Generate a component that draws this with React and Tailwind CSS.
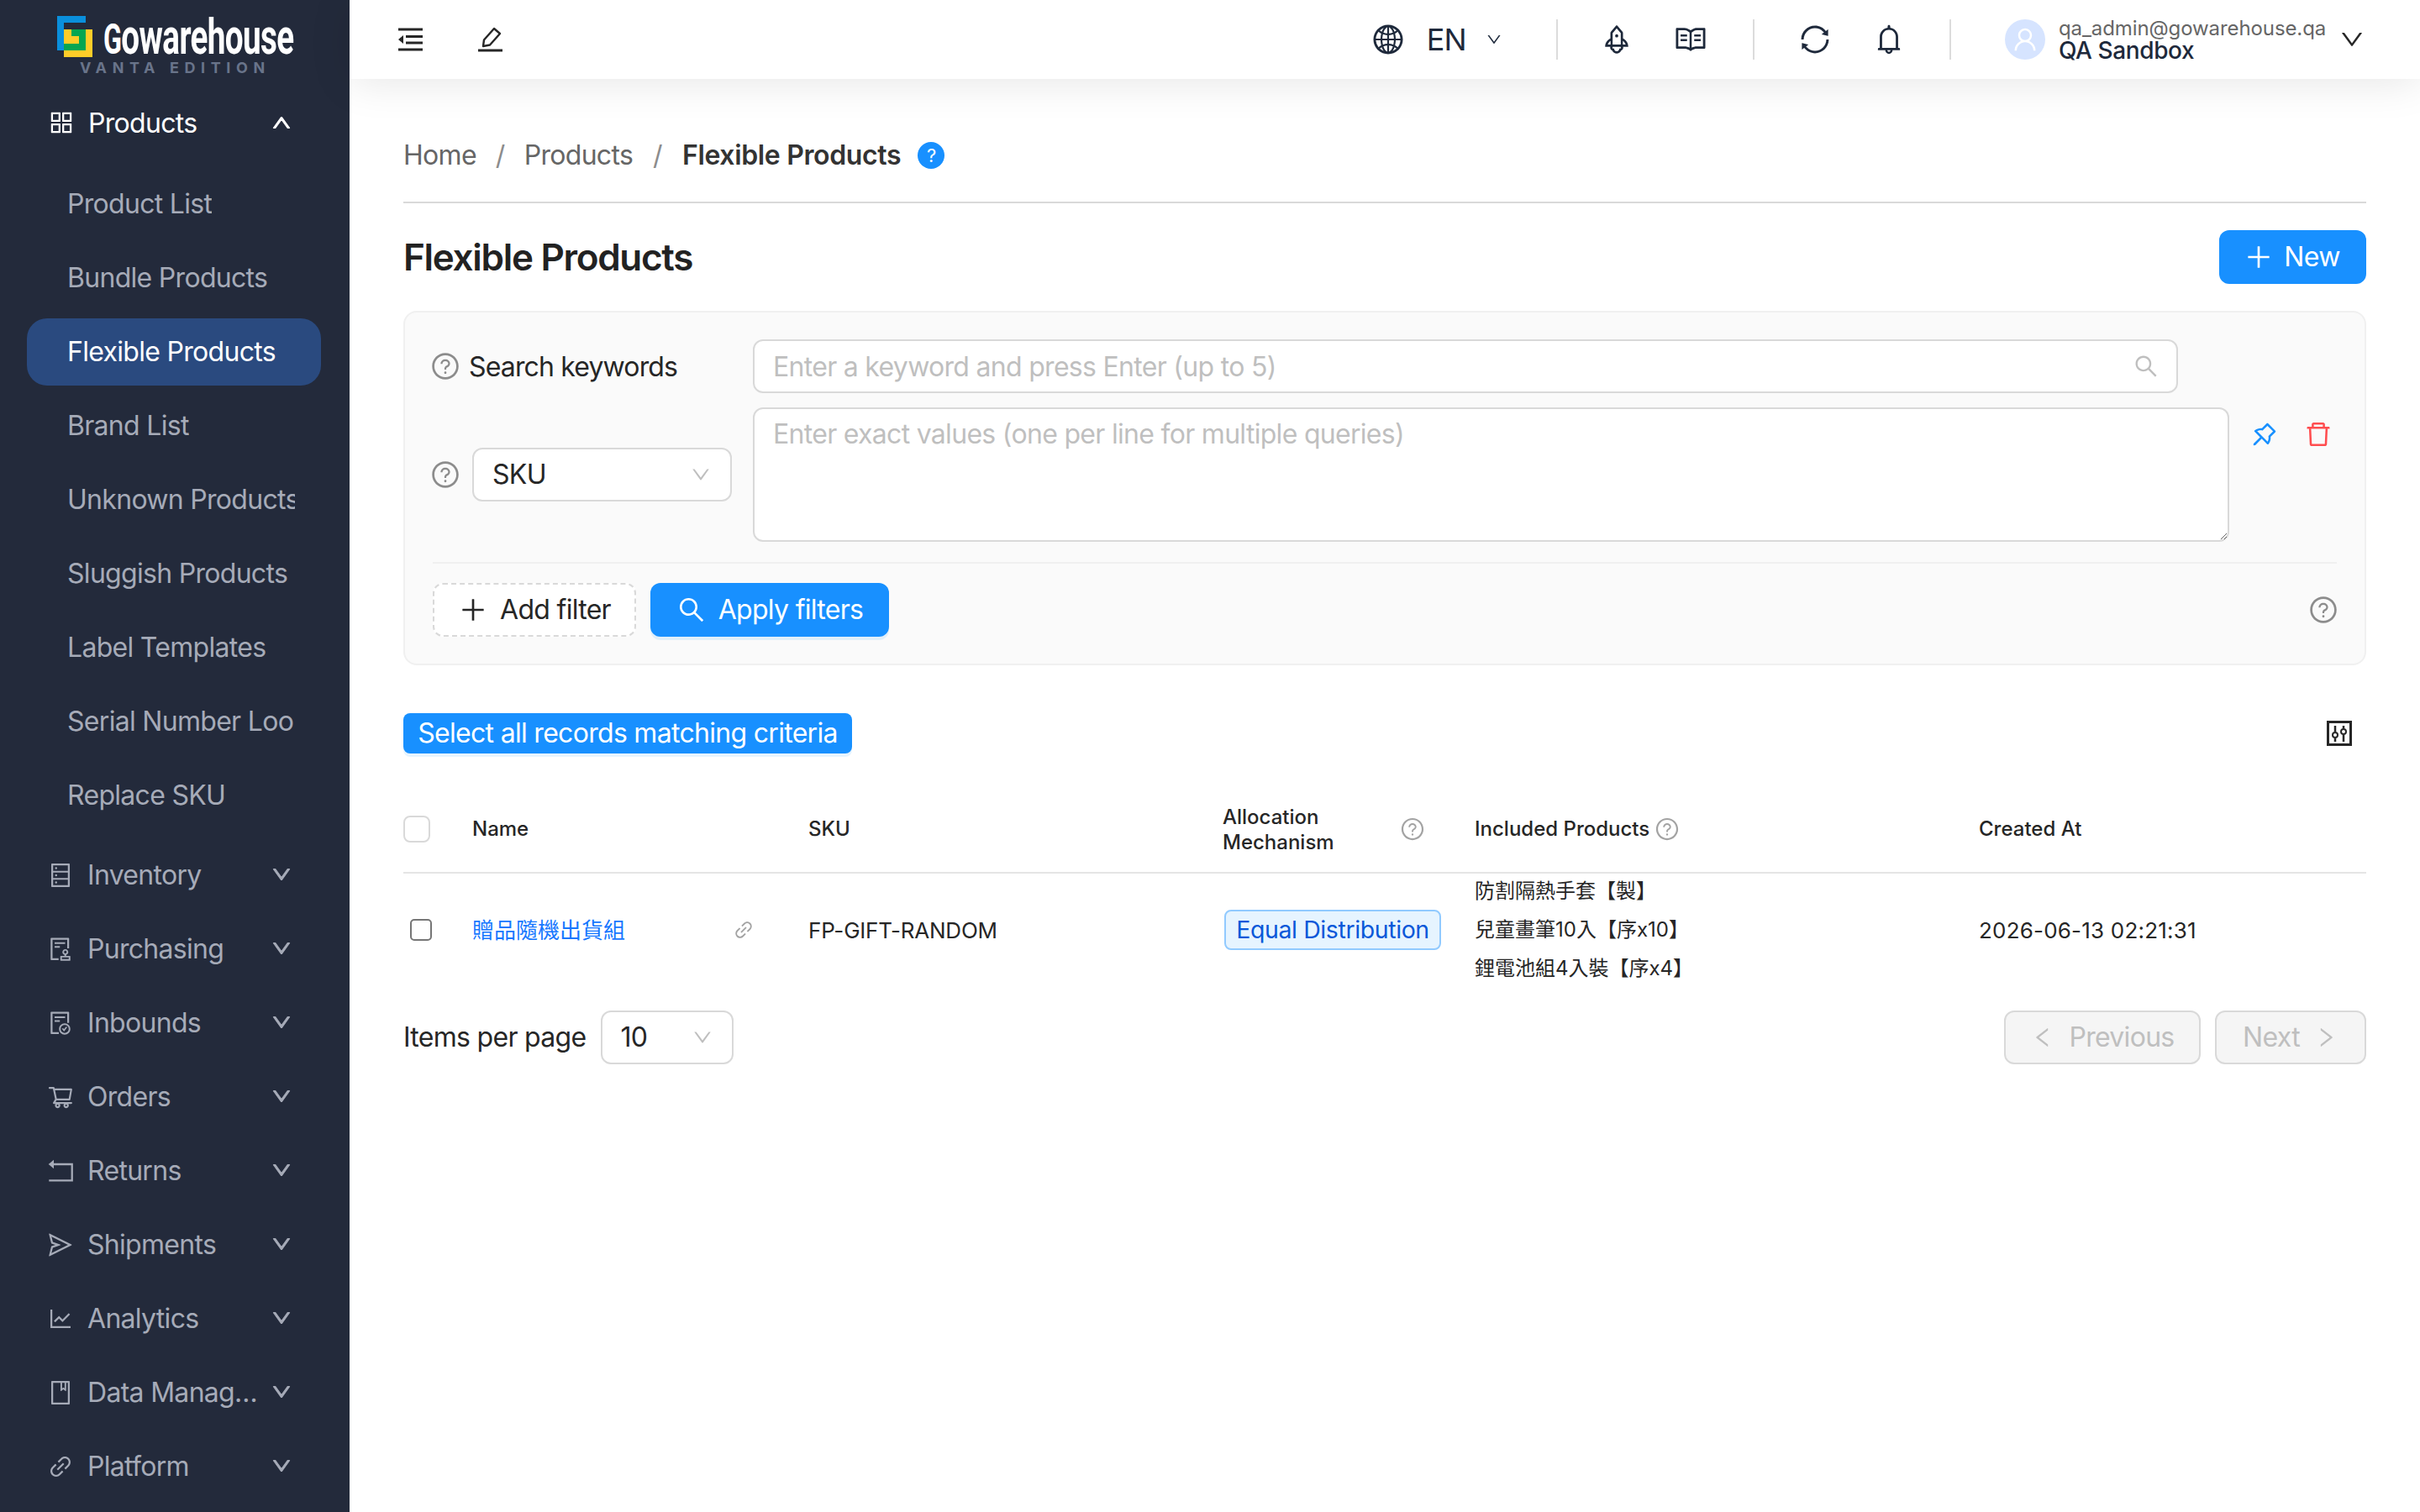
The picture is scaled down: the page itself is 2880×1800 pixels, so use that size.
import {
  AiOutlineAppstore,
  AiOutlineAudit,
  AiOutlineBell,
  AiOutlineBook,
  AiOutlineDatabase,
  AiOutlineDelete,
  AiOutlineDown,
  AiOutlineFileDone,
  AiOutlineGlobal,
  AiOutlineLeft,
  AiOutlineLineChart,
  AiOutlineLink,
  AiOutlinePlus,
  AiOutlinePushpin,
  AiOutlineQuestionCircle,
  AiOutlineRead,
  AiOutlineRight,
  AiOutlineRocket,
  AiOutlineSearch,
  AiOutlineSend,
  AiOutlineShoppingCart,
  AiOutlineSync,
  AiOutlineUp,
  AiOutlineUser,
} from "react-icons/ai";

const FONT = "font-['Inter','Noto_Sans_CJK_TC',sans-serif]";

const ReturnIcon = ({ size = 28, className = "" }) => (
  <svg width={size} height={size} viewBox="0 0 28 28" fill="none" stroke="currentColor" strokeWidth="2" className={className}>
    <path d="M6 7H26V24H2" />
    <path d="M7 2.5V11.5L1.5 7Z" fill="currentColor" stroke="none" />
  </svg>
);

const subItems = [
  "Product List",
  "Bundle Products",
  "Flexible Products",
  "Brand List",
  "Unknown Products",
  "Sluggish Products",
  "Label Templates",
  "Serial Number Lookup",
  "Replace SKU",
];

const groups = [
  { name: "Inventory", icon: AiOutlineDatabase },
  { name: "Purchasing", icon: AiOutlineAudit },
  { name: "Inbounds", icon: AiOutlineFileDone },
  { name: "Orders", icon: AiOutlineShoppingCart },
  { name: "Returns", icon: ReturnIcon },
  { name: "Shipments", icon: AiOutlineSend },
  { name: "Analytics", icon: AiOutlineLineChart },
  { name: "Data Management", icon: AiOutlineBook },
  { name: "Platform", icon: AiOutlineLink },
];

function Logo() {
  return (
    <div className="h-[106px] relative shrink-0">
      <div className="flex items-start pl-[68px] pt-[19px] gap-[12px]">
        <svg width="43" height="50" viewBox="0 0 43 50" className="shrink-0">
          <path d="M0 0H34V8H8V41H0Z" fill="#0a8fdc" />
          <rect x="8" y="16" width="34" height="33" fill="#ffcd29" />
          <path d="M17 16H34V41H8V33H26V24H17Z" fill="#05a651" />
        </svg>
        <span className="font-['Roboto',sans-serif] font-bold text-white text-[60px] leading-[50px] tracking-[-1px] origin-left scale-x-[0.645] whitespace-nowrap">
          <span className="text-[50px]">G</span>owarehouse
        </span>
      </div>
      <div className="absolute left-[95px] top-[72px] text-[18px] leading-[18px] font-bold tracking-[6.6px] text-[#69748a] whitespace-nowrap">
        VANTA EDITION
      </div>
    </div>
  );
}

function Sidebar() {
  return (
    <aside className="w-[416px] shrink-0 h-full bg-[#232a3b] overflow-hidden flex flex-col">
      <Logo />
      <div className="ml-[32px] mr-[34px] h-[80px] flex items-center pl-[24px] pr-[34px] text-white text-[32px] shrink-0">
        <AiOutlineAppstore size={34} className="shrink-0" />
        <span className="ml-[15px] flex-1 pt-[2px]">Products</span>
        <AiOutlineUp size={26} className="stroke-[40px]" />
      </div>
      <div className="mt-[17px] flex flex-col gap-2 shrink-0">
        {subItems.map((item) => (
          <div
            key={item}
            className={`ml-[32px] mr-[34px] h-[80px] shrink-0 flex items-center pl-[48px] pr-[31px] rounded-[24px] text-[32px] ${
              item === "Flexible Products" ? "bg-[#2a4a7f] text-white" : "text-[#a6abb8]"
            }`}
          >
            <span className="whitespace-nowrap overflow-hidden">{item}</span>
          </div>
        ))}
      </div>
      <div className="mt-[15px] flex flex-col gap-2 shrink-0">
        {groups.map((group) => {
          const Icon = group.icon;
          return (
            <div
              key={group.name}
              className="ml-[32px] mr-[34px] h-[80px] shrink-0 flex items-center pl-[24px] pr-[34px] text-[#a6abb8] text-[32px]"
            >
              <Icon size={32} className="shrink-0" />
              <span className="ml-[16px] flex-1 truncate">{group.name}</span>
              <AiOutlineDown size={26} className="shrink-0 ml-[14px] -mt-[2px] stroke-[40px]" />
            </div>
          );
        })}
      </div>
    </aside>
  );
}

function Divider({ className = "" }) {
  return <div className={`w-[2px] h-[48px] bg-[#dcdcdc] ${className}`} />;
}

function Header() {
  return (
    <header className="relative z-10 h-[94px] shrink-0 bg-white flex items-center pl-[58px] pr-[65px] shadow-[0_4px_50px_rgba(0,0,0,0.1)] text-[#1e293b]">
      <svg width="30" height="28" viewBox="0 0 30 28" className="text-[#262626]">
        <path d="M0 2H29M9 10.5H29M9 18H29M0 26H29" stroke="currentColor" strokeWidth="3" fill="none" />
        <path d="M6 9V19L0 14Z" fill="currentColor" />
      </svg>
      <svg width="30" height="30" viewBox="0 0 30 30" className="ml-[65px] text-[#262626]" fill="none" stroke="currentColor" strokeWidth="2.4">
        <path d="M0 28H29" strokeWidth="3" />
        <path d="M6 23L7 15.5L19 2L26 8L14 21.5Z" strokeLinejoin="round" />
      </svg>

      <div className="ml-auto flex items-center">
        <AiOutlineGlobal size={40} />
        <span className="ml-[26px] text-[36px] leading-none">EN</span>
        <AiOutlineDown size={20} className="ml-[23px]" />
        <Divider className="ml-[64px]" />
        <AiOutlineRocket size={40} className="ml-[50px]" />
        <AiOutlineRead size={40} className="ml-[48px]" />
        <Divider className="ml-[54px]" />
        <AiOutlineSync size={40} className="ml-[52px]" />
        <AiOutlineBell size={40} className="ml-[48px]" />
        <Divider className="ml-[52px]" />
        <div className="ml-[64px] w-[48px] h-[48px] rounded-full bg-[#d6e4ff] flex items-center justify-center text-white">
          <AiOutlineUser size={34} />
        </div>
        <div className="ml-[16px] w-[318px] flex flex-col">
          <span className="text-[24px] leading-[26px] tracking-[-0.1px] text-[#666666] whitespace-nowrap">qa_admin@gowarehouse.qa</span>
          <span className="text-[28px] leading-[26px] font-medium tracking-[-0.4px] text-[#1e293b]">QA Sandbox</span>
        </div>
        <AiOutlineDown size={32} className="ml-[15px] text-[#262626]" />
      </div>
    </header>
  );
}

function HelpIcon({ size = 36, className = "" }) {
  return <AiOutlineQuestionCircle size={size} className={`shrink-0 text-[#8c8c8c] ${className}`} />;
}

function FilterPanel() {
  return (
    <section className="mt-[32px] rounded-[16px] border-2 border-[#f0f0f0] bg-[#fafafa] pt-[32px] pb-[32px] pl-[33px] pr-[33px]">
      <div className="flex items-center">
        <HelpIcon className="-ml-[3px]" />
        <span className="ml-[10px] w-[338px] text-[32px] leading-none tracking-[-0.85px] text-[#262626] pt-[2px]">Search keywords</span>
        <div className="w-[1696px] h-[64px] rounded-[12px] border-2 border-[#d9d9d9] bg-white flex items-center pl-[22px] pr-[20px]">
          <input
            readOnly
            placeholder="Enter a keyword and press Enter (up to 5)"
            className="flex-1 bg-transparent outline-none text-[32px] pt-[1px] placeholder:text-[#bfbfbf]"
          />
          <AiOutlineSearch size={32} className="text-[#bfbfbf]" />
        </div>
      </div>
      <div className="mt-[17px] flex items-start">
        <div className="h-[160px] flex items-center">
          <HelpIcon className="-ml-[3px]" />
          <div className="ml-[14px] w-[309px] h-[64px] rounded-[12px] border-2 border-[#d9d9d9] bg-white flex items-center pl-[22px] pr-[22px] text-[32px] text-[#262626]">
            <span className="flex-1">SKU</span>
            <AiOutlineDown size={26} className="text-[#bfbfbf]" />
          </div>
        </div>
        <textarea
          readOnly
          placeholder="Enter exact values (one per line for multiple queries)"
          className="ml-[25px] w-[1757px] h-[160px] rounded-[12px] border-2 border-[#d9d9d9] bg-white py-[10px] px-[22px] outline-none text-[32px] leading-[40px] placeholder:text-[#bfbfbf]"
        />
        <AiOutlinePushpin size={36} className="ml-[24px] mt-[14px] text-[#1890ff]" />
        <AiOutlineDelete size={36} className="ml-[28px] mt-[14px] text-[#ff4d4f]" />
      </div>
      <div className="mt-[24px] h-[2px] bg-[#f0f0f0]" />
      <div className="mt-[23px] flex items-center">
        <button className="w-[242px] h-[64px] rounded-[12px] border-2 border-dashed border-[#d9d9d9] bg-white flex items-center justify-center gap-[14px] text-[32px] text-[#262626]">
          <AiOutlinePlus size={36} />
          Add filter
        </button>
        <button className="ml-[17px] w-[284px] h-[64px] rounded-[12px] bg-[#1890ff] flex items-center justify-center gap-[14px] text-[32px] text-white shadow-[0_4px_0_rgba(5,145,255,0.1)]">
          <AiOutlineSearch size={36} />
          Apply filters
        </button>
        <HelpIcon className="ml-auto -mr-[2px]" />
      </div>
    </section>
  );
}

const CELL_GRID = "grid grid-cols-[82px_400px_493px_300px_600px_1fr] items-center";

function ColumnsIcon() {
  return (
    <svg width="30" height="30" viewBox="0 0 30 30" className="mr-[17px] text-[#262626]" fill="none" stroke="currentColor">
      <rect x="1.5" y="1.5" width="27" height="27" strokeWidth="3" />
      <path d="M10 6V13M10 21V25M20 6V9M20 17V25" strokeWidth="2.5" />
      <circle cx="10" cy="17" r="3" strokeWidth="2" />
      <circle cx="20" cy="13" r="3" strokeWidth="2" />
    </svg>
  );
}

function ProductsTable() {
  return (
    <div className="mt-[39px] tracking-normal">
      <div className={`${CELL_GRID} h-[104px] border-b-2 border-[#e5e5e5] text-[24px] font-medium text-[#262626]`}>
        <div className="w-[32px] h-[32px] rounded-[8px] border-2 border-[#d9d9d9] bg-white" />
        <div>Name</div>
        <div>SKU</div>
        <div className="flex items-center">
          <span className="w-[211px] leading-[30px] pt-[2px]">Allocation Mechanism</span>
          <HelpIcon size={30} className="text-[#a3a3a3]" />
        </div>
        <div className="flex items-center gap-[6px]">
          Included Products
          <HelpIcon size={30} className="text-[#a3a3a3]" />
        </div>
        <div>Created At</div>
      </div>
      <div className={`${CELL_GRID} grid-rows-[134px] h-[134px] text-[26px] text-[#262626]`}>
        <input type="checkbox" readOnly className="ml-[8px] w-[26px] h-[26px] appearance-none rounded-[5px] border-2 border-[#767676] bg-white" />
        <div className="flex items-center pr-[64px]">
          <span className="flex-1 text-[#1677ff]">贈品隨機出貨組</span>
          <AiOutlineLink size={26} className="text-[#a3a3a3]" />
        </div>
        <div className="tracking-[-0.2px]">FP-GIFT-RANDOM</div>
        <div>
          <span className="inline-flex items-center justify-center ml-[2px] w-[258px] h-[48px] rounded-[8px] border-2 border-[#91caff] bg-[#e6f4ff] text-[28.5px] tracking-[-0.4px] text-[#0958d9]">
            Equal Distribution
          </span>
        </div>
        <div className="h-[134px] flex flex-col justify-center text-[24px] leading-[46px]">
          <span>防割隔熱手套【製】</span>
          <span>兒童畫筆10入【序x10】</span>
          <span>鋰電池組4入裝【序x4】</span>
        </div>
        <div className="tracking-[0.2px]">2026-06-13 02:21:31</div>
      </div>
    </div>
  );
}

export default function App() {
  return (
    <div className={`${FONT} tracking-[-0.7px] w-full h-screen flex overflow-hidden bg-white`}>
      <Sidebar />
      <main className="flex-1 min-w-0 flex flex-col">
        <Header />
        <div className="flex-1 px-[64px]">
          <div className="mt-[59px] h-[64px] flex items-center text-[32px] text-[#666666]">
            <span>Home</span>
            <span className="mx-[23px] text-[#8c8c8c]">/</span>
            <span>Products</span>
            <span className="mx-[24px] text-[#8c8c8c]">/</span>
            <span className="font-semibold tracking-[-0.35px] text-[#333333]">Flexible Products</span>
            <span className="ml-[20px] w-[32px] h-[32px] rounded-full bg-[#1890ff] text-white text-[22px] flex items-center justify-center">
              ?
            </span>
          </div>
          <div className="mt-[23px] h-[2px] bg-[#d9d9d9]" />

          <div className="mt-[32px] h-[64px] flex items-center justify-between">
            <h1 className="text-[44px] font-semibold tracking-[-1.3px] text-[#222222]">Flexible Products</h1>
            <button className="w-[175px] h-[64px] rounded-[12px] bg-[#1890ff] text-white text-[32px] flex items-center justify-center gap-[12px] pr-[2px]">
              <AiOutlinePlus size={36} />
              New
            </button>
          </div>

          <FilterPanel />

          <div className="mt-[57px] h-[48px] flex items-center justify-between">
            <button className="h-[48px] w-[534px] rounded-[8px] bg-[#1890ff] text-white text-[32px] leading-none shadow-[0_4px_0_rgba(5,145,255,0.1)]">
              Select all records matching criteria
            </button>
            <ColumnsIcon />
          </div>

          <ProductsTable />

          <div className="mt-[29px] flex items-center">
            <span className="text-[32px] text-[#262626]">Items per page</span>
            <div className="ml-[18px] w-[158px] h-[64px] rounded-[12px] border-2 border-[#d9d9d9] bg-white flex items-center pl-[21px] pr-[22px] text-[32px] text-[#262626]">
              <span className="flex-1">10</span>
              <AiOutlineDown size={26} className="text-[#bfbfbf]" />
            </div>
            <button className="ml-auto w-[234px] h-[64px] rounded-[12px] border-2 border-[#d9d9d9] bg-[#f5f5f5] text-[#bfbfbf] text-[32px] flex items-center justify-center gap-[16px]">
              <AiOutlineLeft size={30} />
              Previous
            </button>
            <button className="ml-[17px] w-[180px] h-[64px] rounded-[12px] border-2 border-[#d9d9d9] bg-[#f5f5f5] text-[#bfbfbf] text-[32px] flex items-center justify-center gap-[16px]">
              Next
              <AiOutlineRight size={30} />
            </button>
          </div>
        </div>
      </main>
    </div>
  );
}
